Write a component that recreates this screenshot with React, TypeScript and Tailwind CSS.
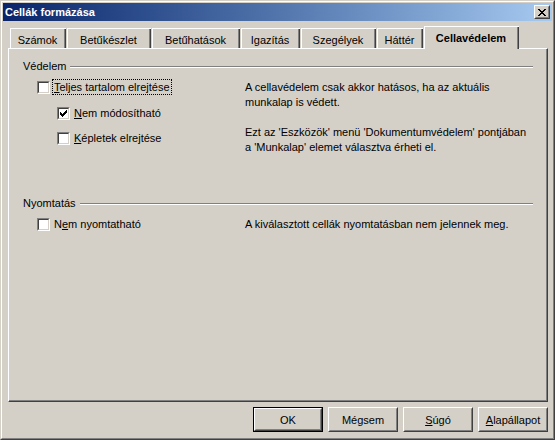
import type { ReactNode } from "react";

const tabs = [
  { label: "Számok", w: "w-[56px]" },
  { label: "Betűkészlet", w: "w-[84px]" },
  { label: "Betűhatások", w: "w-[88px]" },
  { label: "Igazítás", w: "w-[59px]" },
  { label: "Szegélyek", w: "w-[75px]" },
  { label: "Háttér", w: "w-[46px]" },
];

function CheckBox({ checked }: { checked?: boolean }) {
  return (
    <span className="mt-[2px] block h-[13px] w-[13px] shrink-0 border border-t-[#808080] border-l-[#808080] border-r-white border-b-white">
      <span className="block h-full w-full border border-t-[#404040] border-l-[#404040] border-r-[#d4d0c8] border-b-[#d4d0c8] bg-white">
        {checked && (
          <svg width="7" height="7" viewBox="0 0 7 7" className="ml-px mt-px block" shapeRendering="crispEdges">
            <path d="M0 2h1v3H0zM1 3h1v3H1zM2 4h1v3H2zM3 3h1v3H3zM4 2h1v3H4zM5 1h1v3H5zM6 0h1v3H6z" fill="#000" />
          </svg>
        )}
      </span>
    </span>
  );
}

function CheckRow({
  children,
  checked,
  focused,
  className,
}: {
  children: ReactNode;
  checked?: boolean;
  focused?: boolean;
  className: string;
}) {
  return (
    <div className={`flex h-[16px] items-start ${className}`}>
      <CheckBox checked={checked} />
      <span
        className={`ml-[2px] h-[16px] px-px leading-[14px] whitespace-nowrap border ${
          focused ? "border-dotted border-black" : "border-transparent"
        }`}
      >
        {children}
      </span>
    </div>
  );
}

function GroupTitle({ children, className }: { children: ReactNode; className?: string }) {
  return (
    <div className={`flex h-[14px] items-center leading-[14px] ${className ?? ""}`}>
      <span>{children}</span>
      <span className="ml-[4px] mt-[2px] h-[2px] flex-1 border-t border-t-[#808080] border-b border-b-white" />
    </div>
  );
}

function Button({ children, def }: { children: ReactNode; def?: boolean }) {
  const body = (
    <span className="flex h-full w-full border border-t-white border-l-white border-r-[#404040] border-b-[#404040]">
      <span className="flex flex-1 items-center justify-center border border-t-[#d4d0c8] border-l-[#d4d0c8] border-r-[#808080] border-b-[#808080] leading-[14px]">
        {children}
      </span>
    </span>
  );
  return (
    <div className={`h-[25px] w-[70px] ${def ? "border border-black" : ""}`}>{body}</div>
  );
}

export default function App() {
  return (
    <div className="h-[440px] w-[555px] border border-t-[#d4d0c8] border-l-[#d4d0c8] border-r-[#404040] border-b-[#404040] bg-[#d4d0c8] font-['Liberation_Sans',Arial,sans-serif] text-[11px] text-black">
      <div className="flex h-full flex-col border border-t-white border-l-white border-r-[#808080] border-b-[#808080] p-px">
        {/* Title bar */}
        <div className="flex h-[18px] items-center justify-between bg-gradient-to-r from-[#0a246a] to-[#a6caf0] pl-[2px] pr-[2px]">
          <span className="font-bold leading-[14px] text-white">Cellák formázása</span>
          <button className="h-[14px] w-[16px] border border-t-white border-l-white border-r-[#404040] border-b-[#404040] bg-[#d4d0c8]">
            <span className="block h-full w-full border border-t-[#d4d0c8] border-l-[#d4d0c8] border-r-[#808080] border-b-[#808080]">
              <svg width="8" height="7" viewBox="0 0 8 7" className="ml-[2px] mt-[2px] block" shapeRendering="crispEdges">
                <path d="M0 0h2v1H0zM6 0h2v1H6zM1 1h2v1H1zM5 1h2v1H5zM2 2h4v1H2zM3 3h2v1H3zM2 4h4v1H2zM1 5h2v1H1zM5 5h2v1H5zM0 6h2v1H0zM6 6h2v1H6z" fill="#000" />
              </svg>
            </span>
          </button>
        </div>

        <div className="flex flex-1 flex-col pl-[5px] pr-[4px]">
          {/* Tabs */}
          <div className="mt-[5px] flex h-[22px] items-end pl-[2px]">
            {tabs.map((t) => (
              <div
                key={t.label}
                className={`${t.w} mr-px h-[20px] shrink-0 border-t border-l border-t-white border-l-white`}
              >
                <div className="h-full border-r border-r-[#404040]">
                  <div className="h-full border-r border-r-[#808080] pt-[4px] text-center leading-[14px] whitespace-nowrap">
                    {t.label}
                  </div>
                </div>
              </div>
            ))}
            <div className="relative z-10 -mb-px h-[23px] w-[95px] shrink-0 border-t border-l border-t-white border-l-white bg-[#d4d0c8]">
              <div className="h-full border-r border-r-[#404040]">
                <div className="h-full border-r border-r-[#808080] pt-[4px] text-center font-bold leading-[14px] whitespace-nowrap">
                  Cellavédelem
                </div>
              </div>
            </div>
          </div>

          {/* Panel */}
          <div className="h-[354px] border-t border-l border-t-white border-l-white border-r border-b border-r-[#404040] border-b-[#404040]">
            <div className="h-full border-r border-b border-r-[#808080] border-b-[#808080] pl-[14px] pr-[13px] pt-[10px]">
              <GroupTitle>Védelem</GroupTitle>
              <div className="flex">
                <div className="w-[222px]">
                  <CheckRow focused className="ml-[14px] mt-[6px]">
                    <u>T</u>eljes tartalom elrejtése
                  </CheckRow>
                  <CheckRow checked className="ml-[34px] mt-[10px]">
                    <u>N</u>em módosítható
                  </CheckRow>
                  <CheckRow className="ml-[34px] mt-[9px]">
                    <u>K</u>épletek elrejtése
                  </CheckRow>
                </div>
                <div className="pt-[7px] leading-[15px]">
                  <p>A cellavédelem csak akkor hatásos, ha az aktuális</p>
                  <p>munkalap is védett.</p>
                  <p className="mt-[15px]">Ezt az 'Eszközök' menü 'Dokumentumvédelem' pontjában</p>
                  <p>a 'Munkalap' elemet választva érheti el.</p>
                </div>
              </div>

              <GroupTitle className="mt-[41px]">Nyomtatás</GroupTitle>
              <div className="flex">
                <div className="w-[222px]">
                  <CheckRow className="ml-[14px] mt-[6px]">
                    N<u>e</u>m nyomtatható
                  </CheckRow>
                </div>
                <div className="pt-[7px] leading-[14px]">
                  <p>A kiválasztott cellák nyomtatásban nem jelennek meg.</p>
                </div>
              </div>
            </div>
          </div>

          {/* Buttons */}
          <div className="mt-[5px] flex justify-end gap-[5px]">
            <Button def>OK</Button>
            <Button>Mégsem</Button>
            <Button>
              <u>S</u>úgó
            </Button>
            <Button>
              <u>A</u>lapállapot
            </Button>
          </div>
        </div>
      </div>
    </div>
  );
}
